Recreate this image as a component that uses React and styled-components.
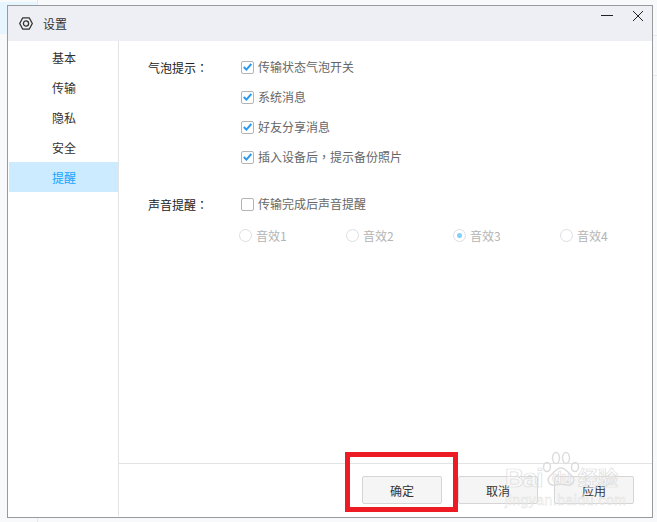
import styled, { createGlobalStyle } from "styled-components";

const GlobalStyle = createGlobalStyle`
  html, body {
    margin: 0;
    padding: 0;
    background: #f8f9fb;
  }
  body {
    font-family: "Noto Sans CJK SC", "Liberation Sans", sans-serif;
  }
`;

const Style = {
  Desktop: styled.div`
    position: relative;
    width: 657px;
    height: 522px;
    overflow: hidden;
    padding: 5px 0 0 7px;
    box-sizing: border-box;
  `,
  BackdropTab: styled.div`
    position: absolute;
    left: 0;
    top: 2px;
    width: 37px;
    height: 32px;
    background: #e6f5fe;
  `,
  BackdropLine: styled.div`
    position: absolute;
    left: 37px;
    top: 0;
    width: 1px;
    height: 522px;
    background: #e4e6ea;
  `,
  BackdropRule: styled.div`
    position: absolute;
    left: 650px;
    top: ${(p) => p.$top}px;
    width: 7px;
    height: 1px;
    background: #e8e9ec;
  `,
  Window: styled.div`
    position: relative;
    width: 646px;
    height: 513px;
    box-sizing: border-box;
    border: 1px solid #999a9d;
    background: #fff;
    display: flex;
    flex-direction: column;
  `,
  TitleBar: styled.div`
    height: 35px;
    flex: none;
    background: #eeeff4;
    display: flex;
    align-items: center;
    padding: 0 8px 0 11px;
    color: #333;
    font-size: 12px;
  `,
  TitleText: styled.span`
    margin-left: 10px;
    margin-top: 0;
  `,
  WindowControls: styled.div`
    margin-left: auto;
    align-self: flex-start;
    display: flex;
    gap: 18px;
    padding-top: 4px;
  `,
  Body: styled.div`
    flex: 1;
    display: flex;
    min-height: 0;
  `,
  Sidebar: styled.nav`
    width: 111px;
    flex: none;
    box-sizing: border-box;
    border-right: 1px solid #e3e3e3;
    padding: 1px 0 0 1px;
    margin-bottom: 1px;
  `,
  MenuItem: styled.div`
    height: 30px;
    line-height: 32px;
    padding-left: 43px;
    font-size: 12px;
    color: ${(p) => (p.$active ? "#11a5ff" : "#333")};
    background: ${(p) => (p.$active ? "#cdebff" : "transparent")};
  `,
  Main: styled.div`
    flex: 1;
    min-width: 0;
    display: flex;
    flex-direction: column;
  `,
  Content: styled.div`
    flex: 1;
    padding: 11px 0 0 29px;
  `,
  Section: styled.section`
    display: grid;
    grid-template-columns: 93px 1fr;
    margin-bottom: ${(p) => p.$gap || 0}px;
  `,
  SectionLabel: styled.div`
    height: 30px;
    line-height: 32px;
    font-size: 12px;
    color: #222;
  `,
  CenteredPunct: styled.span`
    font-family: "Noto Sans CJK TC", sans-serif;
  `,
  OptionList: styled.div`
    display: flex;
    flex-direction: column;
  `,
  CheckRow: styled.label`
    height: 30px;
    display: flex;
    align-items: center;
    gap: 4px;
    font-size: 12px;
    color: #666;
  `,
  CheckText: styled.span`
    margin-top: -2px;
  `,
  CheckBox: styled.span`
    width: 13px;
    height: 13px;
    box-sizing: border-box;
    border: 1px solid #b4b4b4;
    border-radius: 2px;
    background: #fff;
    display: flex;
    align-items: center;
    justify-content: center;
  `,
  RadioRow: styled.div`
    height: 32px;
    display: grid;
    grid-template-columns: repeat(4, 107px);
    margin-left: -2px;
  `,
  RadioItem: styled.div`
    display: flex;
    align-items: center;
    gap: 4px;
    font-size: 12px;
    color: #b4b4b4;
  `,
  RadioDot: styled.span`
    width: 13px;
    height: 13px;
    box-sizing: border-box;
    border: 1px solid #dcdee2;
    border-radius: 50%;
    display: flex;
    align-items: center;
    justify-content: center;
    &::after {
      content: "";
      width: 5px;
      height: 5px;
      border-radius: 50%;
      background: ${(p) => (p.$on ? "#7fd0ff" : "transparent")};
    }
  `,
  Footer: styled.footer`
    height: 54px;
    flex: none;
    border-top: 1px solid #e3e3e3;
    display: flex;
    justify-content: flex-end;
    gap: 16px;
    padding: 12px 18px 0 0;
    box-sizing: border-box;
  `,
  Button: styled.button`
    width: 80px;
    height: 28px;
    box-sizing: border-box;
    border: 1px solid #d5d5d5;
    border-radius: 2px;
    background: #f5f5f5;
    color: #333;
    font-family: inherit;
    font-size: 12px;
    padding: 0;
  `,
  Highlight: styled.div`
    position: absolute;
    left: 345px;
    top: 452px;
    width: 113px;
    height: 60px;
    box-sizing: border-box;
    border: 5px solid #ed1c24;
  `,
  Watermark: styled.div`
    position: absolute;
    left: 503px;
    top: 451px;
    width: 150px;
    height: 60px;
    color: rgba(255, 255, 255, 0.35);
    -webkit-text-stroke: 0.7px #dcdcdc;
    white-space: nowrap;
  `,
  WatermarkBrand: styled.div`
    position: absolute;
    left: 2px;
    top: 13px;
    font-family: "Liberation Sans", sans-serif;
    font-weight: 700;
    font-size: 26px;
    letter-spacing: -1px;
    line-height: 28px;
  `,
  WatermarkDu: styled.div`
    position: absolute;
    left: 49px;
    top: 18px;
    font-family: "Liberation Sans", sans-serif;
    font-weight: 700;
    font-size: 16px;
    line-height: 18px;
  `,
  WatermarkCn: styled.div`
    position: absolute;
    left: 75px;
    top: 16px;
    font-size: 20px;
    font-weight: 700;
    line-height: 22px;
  `,
  WatermarkUrl: styled.div`
    position: absolute;
    left: 2px;
    top: 42px;
    font-family: "Liberation Sans", sans-serif;
    font-size: 14px;
    letter-spacing: 0.5px;
    line-height: 15px;
    -webkit-text-stroke: 0.4px #dcdcdc;
  `,
  PawMark: styled.svg`
    position: absolute;
    left: 39px;
    top: 0;
  `,
};

const GearIcon = () => (
  <svg width="14" height="13" viewBox="0 0 14 13" fill="none" stroke="#333" strokeWidth="1.3">
    <path d="M.7 6.500L3.800.8H10.200L13.300 6.500L10.200 12.200H3.800Z" strokeLinejoin="round" />
    <circle cx="7" cy="6.500" r="2.600" />
  </svg>
);

const MinimizeIcon = () => (
  <svg width="13" height="13" viewBox="0 0 13 13" stroke="#222" strokeWidth="1">
    <path d="M0 5.500H12" />
  </svg>
);

const CloseIcon = () => (
  <svg width="12" height="12" viewBox="0 0 12 12" stroke="#222" strokeWidth="1">
    <path d="M1 1L11 11M11 1L1 11" />
  </svg>
);

const CheckMark = () => (
  <svg width="9" height="8" viewBox="0 0 9 8" fill="none" stroke="#2b9af3" strokeWidth="2">
    <path d="M.8 4l2.600 2.600L8.300 1" />
  </svg>
);

const PawIcon = () => (
  <Style.PawMark width="38" height="38" viewBox="0 0 38 38" fill="none" stroke="#dcdcdc" strokeWidth="1.5">
    <ellipse cx="5" cy="16" rx="3.500" ry="4.500" />
    <ellipse cx="14" cy="7" rx="3.500" ry="5.500" />
    <ellipse cx="24" cy="7" rx="3.500" ry="5.500" />
    <ellipse cx="33" cy="16" rx="3.500" ry="4.500" />
    <path d="M19 17c-5 0-7 5-11 8-4 4-1 10 5 9 4-1 8-1 12 0 6 1 9-5 5-9-4-3-6-8-11-8z" />
  </Style.PawMark>
);

const menuItems = ["基本", "传输", "隐私", "安全", "提醒"];
const bubbleOptions = ["传输状态气泡开关", "系统消息", "好友分享消息"];
const sounds = ["音效1", "音效2", "音效3", "音效4"];

const App = () => {
  return (
    <>
      <GlobalStyle />
      <Style.Desktop>
        <Style.BackdropTab />
        <Style.BackdropLine />
        <Style.BackdropRule $top={35} />
        <Style.BackdropRule $top={75} />
        <Style.Window>
          <Style.TitleBar>
            <GearIcon />
            <Style.TitleText>设置</Style.TitleText>
            <Style.WindowControls>
              <MinimizeIcon />
              <CloseIcon />
            </Style.WindowControls>
          </Style.TitleBar>
          <Style.Body>
            <Style.Sidebar>
              {menuItems.map((item) => (
                <Style.MenuItem key={item} $active={item === "提醒"}>
                  {item}
                </Style.MenuItem>
              ))}
            </Style.Sidebar>
            <Style.Main>
              <Style.Content>
                <Style.Section $gap={17}>
                  <Style.SectionLabel>
                    气泡提示<Style.CenteredPunct>：</Style.CenteredPunct>
                  </Style.SectionLabel>
                  <Style.OptionList>
                    {bubbleOptions.map((option) => (
                      <Style.CheckRow key={option}>
                        <Style.CheckBox>
                          <CheckMark />
                        </Style.CheckBox>
                        <Style.CheckText>{option}</Style.CheckText>
                      </Style.CheckRow>
                    ))}
                    <Style.CheckRow>
                      <Style.CheckBox>
                        <CheckMark />
                      </Style.CheckBox>
                      <Style.CheckText>
                        插入设备后<Style.CenteredPunct>，</Style.CenteredPunct>提示备份照片
                      </Style.CheckText>
                    </Style.CheckRow>
                  </Style.OptionList>
                </Style.Section>
                <Style.Section>
                  <Style.SectionLabel>
                    声音提醒<Style.CenteredPunct>：</Style.CenteredPunct>
                  </Style.SectionLabel>
                  <Style.OptionList>
                    <Style.CheckRow>
                      <Style.CheckBox />
                      <Style.CheckText>传输完成后声音提醒</Style.CheckText>
                    </Style.CheckRow>
                    <Style.RadioRow>
                      {sounds.map((sound) => (
                        <Style.RadioItem key={sound}>
                          <Style.RadioDot $on={sound === "音效3"} />
                          {sound}
                        </Style.RadioItem>
                      ))}
                    </Style.RadioRow>
                  </Style.OptionList>
                </Style.Section>
              </Style.Content>
              <Style.Footer>
                <Style.Button>确定</Style.Button>
                <Style.Button>取消</Style.Button>
                <Style.Button>应用</Style.Button>
              </Style.Footer>
            </Style.Main>
          </Style.Body>
        </Style.Window>
        <Style.Watermark>
          <PawIcon />
          <Style.WatermarkBrand>Bai</Style.WatermarkBrand>
          <Style.WatermarkDu>du</Style.WatermarkDu>
          <Style.WatermarkCn>经验</Style.WatermarkCn>
          <Style.WatermarkUrl>jingyan.baidu.com</Style.WatermarkUrl>
        </Style.Watermark>
        <Style.Highlight />
      </Style.Desktop>
    </>
  );
};

export default App;
